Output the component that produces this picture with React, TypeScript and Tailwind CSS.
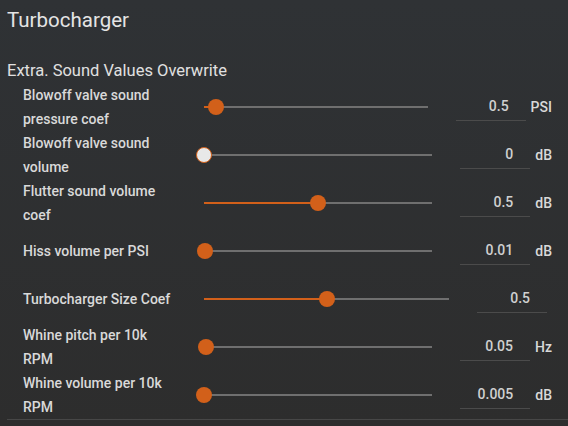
import React from 'react'

// ─── Data ─────────────────────────────────────────────────────────────────────

type Row = {
  label: string
  value: string
  pct: number
  unit?: string
  empty?: boolean
}

const ROWS: Row[] = [
  { label: 'Blowoff valve sound pressure coef', value: '0.5', pct: 5.4, unit: 'PSI' },
  { label: 'Blowoff valve sound volume', value: '0', pct: 0, unit: 'dB', empty: true },
  { label: 'Flutter sound volume coef', value: '0.5', pct: 50, unit: 'dB' },
  { label: 'Hiss volume per PSI', value: '0.01', pct: 0.5, unit: 'dB' },
  { label: 'Turbocharger Size Coef', value: '0.5', pct: 50 },
  { label: 'Whine pitch per 10k RPM', value: '0.05', pct: 1, unit: 'Hz' },
  { label: 'Whine volume per 10k RPM', value: '0.005', pct: 0, unit: 'dB' },
]

// ─── Slider ───────────────────────────────────────────────────────────────────

function Slider({ pct, empty }: { pct: number; empty?: boolean }) {
  return (
    <div className="relative h-[16px] flex-1">
      <div className="absolute left-0 right-0 top-[7px] h-[2px] bg-[#6f6f6f]" />
      <div
        className="absolute left-0 top-[7px] h-[2px] bg-[#d2601a]"
        style={{ width: `${pct}%` }}
      />
      <div
        className={`absolute top-0 h-[16px] w-[16px] -translate-x-1/2 rounded-full ${
          empty ? 'border-[1.5px] border-[#d2601a] bg-[#e8e8e8]' : 'bg-[#d2601a]'
        }`}
        style={{ left: `${pct}%` }}
      />
    </div>
  )
}

// ─── Component ────────────────────────────────────────────────────────────────

export default function App() {
  return (
    <div
      className="h-[426px] w-[568px] overflow-hidden bg-gradient-to-b from-[#2f3235] to-[#2d2d2d] text-[#dcdcdc]"
      style={{ fontFamily: 'Roboto, "Noto Sans", sans-serif' }}
    >
      <div className="pl-[7px] pt-[8px]">
        <div className="text-[20.5px] leading-[24px] text-[#e4e4e4]">Turbocharger</div>

        <div className="mt-[29px] text-[16.5px] leading-[20px] text-[#e0e0e0]">
          Extra. Sound Values Overwrite
        </div>

        <div className="mt-[2px] border-b border-[#474747]">
          {ROWS.map(r => (
            <div key={r.label} className="flex h-[48px] items-center pl-[16px] pr-[16px]">
              <div className="w-[181px] shrink-0 pr-[28px] text-[14px] font-medium leading-[24px] text-[#d9d9d9]">
                {r.label}
              </div>
              <Slider pct={r.pct} empty={r.empty} />
              <div className="ml-[28px] flex h-[28px] w-[70px] shrink-0 items-center justify-end border-b border-[#4b4b4b] pr-[17px] text-[14px] font-medium text-[#d0d0d0]">
                {r.value}
              </div>
              <span className="ml-[5px] text-[14px] font-medium text-[#d9d9d9]">{r.unit ?? ''}</span>
            </div>
          ))}
        </div>
      </div>
    </div>
  )
}
